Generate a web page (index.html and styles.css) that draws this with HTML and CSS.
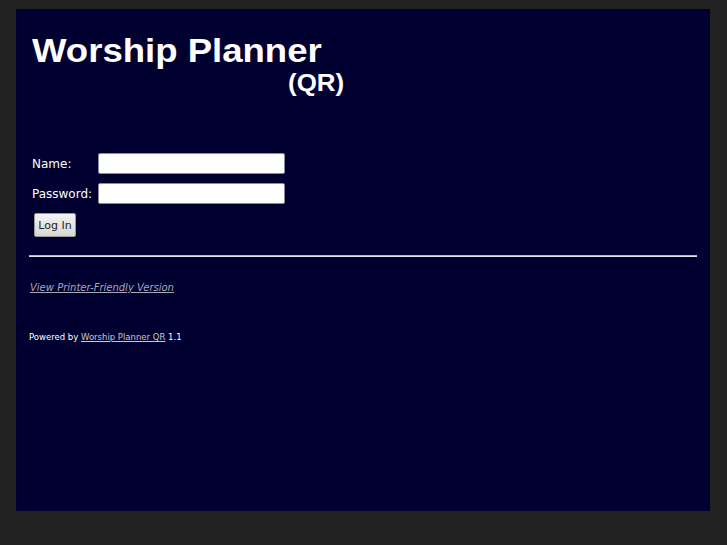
FILE: index.html
```html
<!DOCTYPE html>
<html>
<head>
<meta charset="utf-8">
<title>Worship Planner (QR)</title>
<link rel="stylesheet" href="styles.css">
</head>
<body>
<div class="panel">
  <div class="logo">
    <div class="logo-main">Worship Planner</div>
    <div class="logo-sub">(QR)</div>
  </div>
  <form class="login">
    <label class="lbl" for="name">Name:</label>
    <input class="field" id="name" type="text">
    <label class="lbl" for="pw">Password:</label>
    <input class="field" id="pw" type="password">
    <div class="btn-row"><button type="button" class="btn">Log In</button></div>
  </form>
  <hr class="rule">
  <a class="printer" href="#">View Printer-Friendly Version</a>
  <p class="powered">Powered by <a href="#">Worship Planner QR</a> 1.1</p>
</div>
</body>
</html>
```
FILE: styles.css
```css
html, body {
  margin: 0;
  padding: 0;
  background: #222222;
}
body {
  padding: 9px 17px 34px 16px;
  font-family: "DejaVu Sans", sans-serif;
  color: #ffffff;
}
.panel {
  background: #000030;
  height: 502px;
  box-sizing: border-box;
  padding: 22px 13px 0 13px;
}
.logo {
  display: flex;
  flex-direction: column;
  align-items: flex-start;
  margin-left: 3px;
  font-family: "Liberation Sans", Arial, sans-serif;
  color: #ffffff;
}
.logo-main {
  font-size: 34px;
  font-weight: bold;
  line-height: 39px;
  transform: scaleX(1.075);
  transform-origin: left center;
}
.logo-sub {
  font-size: 24px;
  font-weight: bold;
  line-height: 26px;
  margin-left: 256px;
  transform: scaleX(1.08);
  transform-origin: left center;
}
.login {
  display: grid;
  grid-template-columns: auto 187px;
  justify-content: start;
  align-items: center;
  column-gap: 6px;
  row-gap: 9px;
  margin: 57px 0 0 3px;
}
.lbl {
  font-size: 12px;
  color: #ffffff;
}
.field {
  width: 187px;
  height: 21px;
  box-sizing: border-box;
  margin: 0;
  border: 1px solid #8a8a9a;
  border-radius: 2px;
  background: #ffffff;
}
.btn-row {
  grid-column: 1 / 3;
  padding-left: 2px;
}
.btn {
  font-family: "DejaVu Sans", sans-serif;
  font-size: 11px;
  color: #222;
  height: 24px;
  width: 42px;
  padding: 0;
  border: 1px solid #9a9a9a;
  border-radius: 2px;
  background: linear-gradient(#f4f4f4, #d6d6d6);
}
.rule {
  margin: 18px 0 0 0;
  border: 0;
  border-top: 1px solid #b8b8c0;
  border-bottom: 1px solid #e0e0e8;
  height: 0;
}
.printer {
  display: inline-block;
  margin: 25px 0 0 1px;
  font-size: 10px;
  font-style: italic;
  color: #a8a8b8;
}
.powered {
  margin: 37px 0 0 0;
  font-size: 8.5px;
  color: #ffffff;
}
.powered a {
  color: #c8c8d0;
}
```
